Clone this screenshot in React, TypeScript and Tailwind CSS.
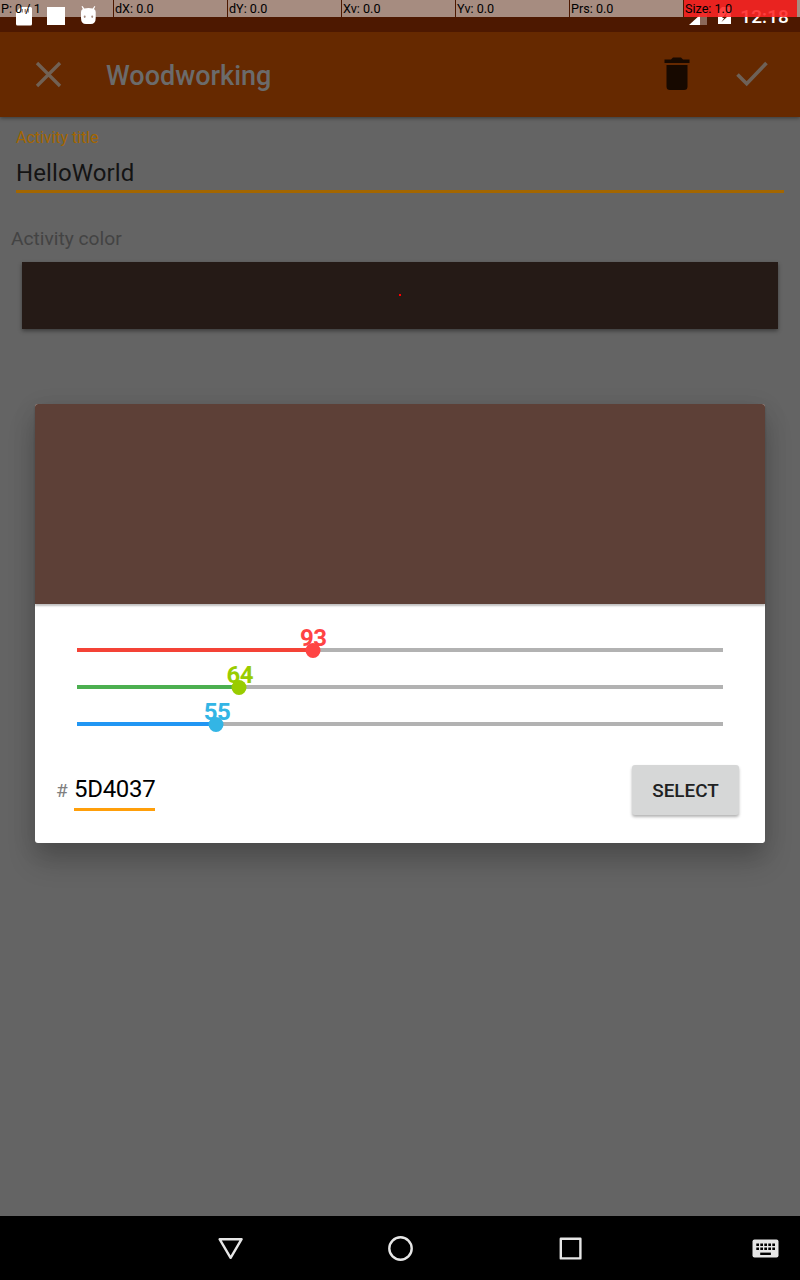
import React from "react";

type Channel = { value: number; fill: string; thumb: string; track: string };

const channels: Channel[] = [
  { value: 93, fill: "bg-[#f44336]", thumb: "bg-[#ff4444]", track: "text-[#ff4444]" },
  { value: 64, fill: "bg-[#4caf50]", thumb: "bg-[#99cc00]", track: "text-[#99cc00]" },
  { value: 55, fill: "bg-[#2196f3]", thumb: "bg-[#33b5e5]", track: "text-[#33b5e5]" },
];

const readouts = ["P: 0 / 1", "dX: 0.0", "dY: 0.0", "Xv: 0.0", "Yv: 0.0", "Prs: 0.0", "Size: 1.0"];

function PointerReadout() {
  return (
    <div className="absolute inset-x-0 top-0 flex h-[17px] bg-white/50">
      {readouts.map((label, i) => (
        <div
          key={label}
          className={
            (i === 0 ? "w-[113px] pl-px" : "w-[114px] border-l border-[#4d1800] pl-px") +
            (i === 6 ? " bg-[#ff0000]/75" : "") +
            " shrink-0 text-[12.600px] leading-[17px] whitespace-pre text-black"
          }
        >
          {label}
        </div>
      ))}
    </div>
  );
}

function StatusBar() {
  return (
    <div className="relative z-10 h-8 bg-[#4d1800]">
      <div className="flex h-8 items-start justify-between">
        <svg width="110" height="32" viewBox="0 0 110 32" fill="white">
          <path fillRule="evenodd" d="M21 7h9.500q1.500 0 1.500 1.500V24q0 1.500-1.500 1.500h-13Q16 25.500 16 24V12zM21.500 9v3.500h1.500V9zm3 0v3.500H26V9zm3 0v3.500H29V9z" />
          <path d="M47 7h18v18H47z" />
          <path fillRule="evenodd" d="M82.500 6l1.800 2.500Q88.500 7.300 92.700 8.500L94.500 6l.8.500-1.300 2.600Q95.700 10.200 95.700 12V18q0 6-5 6h-4.700q-5 0-5-6v-6q0-1.800 1.800-2.900l-1.300-2.600zM84.700 15.400a1 1 0 1 0 0 2 1 1 0 0 0 0-2zm7.500 0a1 1 0 1 0 0 2 1 1 0 0 0 0-2z" />
        </svg>
        <div className="flex pr-[11px]">
          <svg width="51" height="32" viewBox="0 0 51 32">
            <path d="M18 8v17H1z" fill="white" fillOpacity=".35" />
            <path d="M11 15v10H0z" fill="white" />
            <path fillRule="evenodd" fill="white" d="M33 7h9v17H29V11zM38.500 12l-5.500 6h2.200L32.500 22l6-5.500h-2.200z" />
          </svg>
          <span className="pt-[5px] text-[19px] leading-[24px] font-medium tracking-[0.1px] text-white">12:18</span>
        </div>
      </div>
      <PointerReadout />
    </div>
  );
}

function Toolbar() {
  return (
    <header className="relative flex h-[85px] items-center bg-[#662900] shadow-[0_1px_4px_rgba(0,0,0,0.45)]">
      <svg className="mb-px ml-[32px] shrink-0" width="32" height="32" viewBox="0 0 32 32" fill="none" stroke="#716154" strokeWidth="3.300">
        <path d="M5 5l23 23M28 5L5 28" />
      </svg>
      <h1 className="ml-[42px] grow pt-[2px] text-[27px] leading-8 font-medium text-[#6b6b6b]">Woodworking</h1>
      <svg className="mb-[2px] shrink-0" width="26" height="34" viewBox="0 0 26 34" fill="#170900">
        <path d="M.5 6V2.500H7L9 .5h8l2 2h6.500V6zM2.500 8h21v21.500q0 3.500-3.500 3.500H6q-3.500 0-3.500-3.500z" />
      </svg>
      <svg className="mr-[32px] mb-px ml-[46px] shrink-0" width="32" height="26" viewBox="0 0 32 26" fill="none" stroke="#6e6157" strokeWidth="3.600">
        <path d="M1.500 13.500l9.200 9.200L30.500 2" />
      </svg>
    </header>
  );
}

function ChannelSlider({ channel }: { channel: Channel }) {
  const position = { left: `${(channel.value / 255) * 100}%` };
  return (
    <div className="relative flex h-[37px] items-center">
      <div className="h-1 w-full bg-[#b2b2b2]">
        <div className={"h-1 " + channel.fill} style={{ width: position.left }} />
      </div>
      <span
        className={"absolute top-[-7px] ml-[0.6px] -translate-x-1/2 text-[24px] leading-[28px] font-bold tracking-[-0.5px] " + channel.track}
        style={position}
      >
        {channel.value}
      </span>
      <span className={"absolute top-[11.500px] size-[15px] -translate-x-1/2 rounded-full " + channel.thumb} style={position} />
    </div>
  );
}

function ColorDialog() {
  return (
    <section className="absolute top-[404px] left-[35px] w-[730px] rounded-[3px] bg-white shadow-[0_18px_28px_rgba(0,0,0,0.2),0_5px_24px_rgba(0,0,0,0.1)]">
      <div className="h-[200px] rounded-t-[3px] bg-[#5d4037] shadow-[0_2px_2px_rgba(0,0,0,0.25)]" />
      <div className="px-[42px] pt-[27px]">
        {channels.map((channel) => (
          <ChannelSlider key={channel.value} channel={channel} />
        ))}
      </div>
      <div className="flex h-[101px] items-start pt-[23px] pr-[26px] pl-[21px]">
        <span className="w-[18px] pt-[14px] text-[19px] leading-6 text-[#808080]">#</span>
        <span className="mt-[7px] h-[39px] w-[81px] border-b-[3px] border-[#ff9f0a] text-[24px] leading-[34px] tracking-[-0.3px] text-black">5D4037</span>
        <button className="ml-auto h-[50px] w-[107px] rounded-[3px] bg-[#d6d7d7] pt-[3px] text-[18.900px] font-medium text-[#202122] shadow-[0_2px_3px_rgba(0,0,0,0.3)]">SELECT</button>
      </div>
    </section>
  );
}

function NavigationBar() {
  return (
    <nav className="flex h-16 items-center bg-black pt-px pl-[215px]">
      <svg width="570" height="32" viewBox="0 0 570 32" fill="none" stroke="#e6e6e6" strokeWidth="2.400" strokeLinejoin="round">
        <path d="M4.600 6.200h22L15.600 24.800z" />
        <circle cx="185.500" cy="15.500" r="11.200" />
        <rect x="345.800" y="5.800" width="19.600" height="19.600" />
        <rect x="537.500" y="6.500" width="26" height="18" rx="2" fill="#e6e6e6" stroke="none" />
        <g stroke="#000" strokeLinejoin="miter">
          <path d="M541.300 11.700h19M541.300 15.700h19" strokeWidth="2.600" strokeDasharray="2.700 1.300" />
          <path d="M545.200 20.800h10.700" strokeWidth="2.400" />
        </g>
      </svg>
    </nav>
  );
}

export default function App() {
  return (
    <div className="relative flex h-[1280px] w-[800px] flex-col overflow-hidden bg-[#646464] font-[Roboto,sans-serif]">
      <StatusBar />
      <Toolbar />
      <main className="grow">
        <div className="px-4 pt-[11px]">
          <div className="text-[16px] leading-[20px] tracking-[-0.05px] text-[#a36600]">Activity title</div>
          <div className="mt-[5px] h-[40px] border-b-[3px] border-[#a36600] text-[24px] leading-[40px] tracking-[0.1px] text-[#141414]">HelloWorld</div>
        </div>
        <div className="px-[11px] pt-[34px] text-[19.200px] leading-6 text-[#434343]">Activity color</div>
        <div className="mx-[22px] mt-[11px] flex h-[67px] items-center justify-center bg-[#251a16] shadow-[0_2px_4px_rgba(0,0,0,0.4)]">
          <span className="mb-[2px] size-[2px] bg-[#ff0000]" />
        </div>
      </main>
      <NavigationBar />
      <ColorDialog />
    </div>
  );
}
